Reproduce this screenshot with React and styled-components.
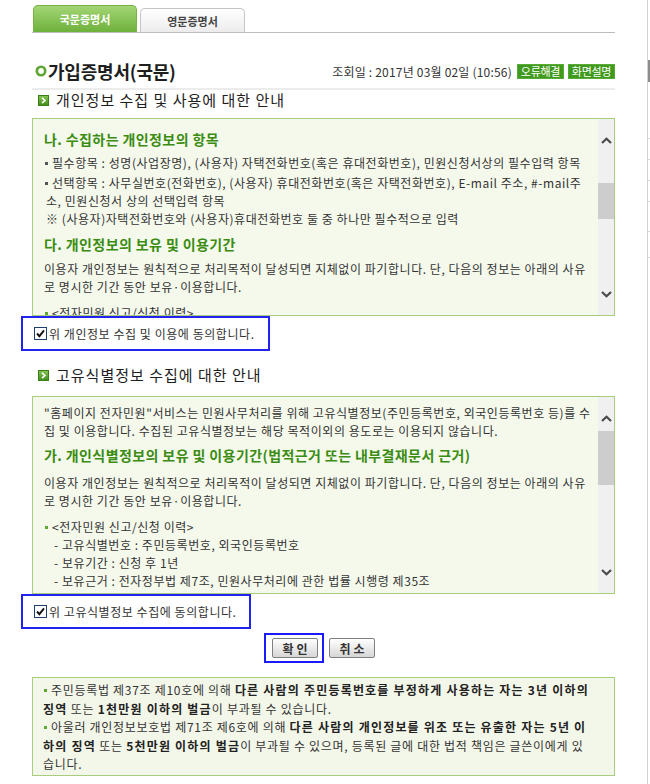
import styled, { createGlobalStyle } from "styled-components";

const GlobalStyle = createGlobalStyle`
  html, body { margin: 0; padding: 0; background: #fff; }
  body {
    font-family: "Noto Sans CJK KR", "Noto Sans", sans-serif;
    font-size: 12px;
    color: #333;
  }
`;

const Ring = () => (
    <svg width="12" height="12" viewBox="0 0 12 12">
        <circle cx="6" cy="6" r="4.2" fill="none" stroke="#5ea531" strokeWidth="2.6" />
    </svg>
);

const ArrowIcon = () => (
    <svg width="11" height="11" viewBox="0 0 11 11">
        <defs>
            <linearGradient id="ag" x1="0" y1="0" x2="0" y2="1">
                <stop offset="0" stopColor="#86c653" />
                <stop offset="1" stopColor="#3f8c19" />
            </linearGradient>
        </defs>
        <rect x="0.5" y="0.5" width="10" height="10" fill="url(#ag)" stroke="#3b7f17" />
        <path d="M4 2.8 L6.9 5.5 L4 8.2" fill="none" stroke="#fff" strokeWidth="1.7" />
    </svg>
);

const Chevron = ({ down }) => (
    <svg width="11" height="8" viewBox="0 0 11 8">
        <path
            d={down ? "M1 2 L5.5 6.2 L10 2" : "M1 6 L5.5 1.8 L10 6"}
            fill="none"
            stroke="#4a4a4a"
            strokeWidth="2.2"
        />
    </svg>
);

const CheckIcon = () => (
    <svg width="13" height="13" viewBox="0 0 13 13">
        <rect x="0.5" y="0.5" width="12" height="12" fill="#fff" stroke="#1c3f6e" />
        <path d="M3 6.5 L5.4 9.2 L10 3.4" fill="none" stroke="#111" strokeWidth="1.9" />
    </svg>
);

const App = () => {
    return (
        <>
            <GlobalStyle />
            <Page>
                <Main>
                    <TabBar>
                        <Tab $active>국문증명서</Tab>
                        <Tab>영문증명서</Tab>
                    </TabBar>

                    <TitleRow>
                        <Title><Ring />가입증명서(국문)</Title>
                        <Meta>
                            <DateText>조회일 : 2017년 03월 02일 (10:56)</DateText>
                            <GreenButton>오류해결</GreenButton>
                            <GreenButton>화면설명</GreenButton>
                        </Meta>
                    </TitleRow>

                    <SectionHead $mt={0} $mb={8}>
                        <ArrowIcon />개인정보 수집 및 사용에 대한 안내
                    </SectionHead>
                    <ScrollBox>
                        <BoxContent $pt={10}>
                            <BoxHeading $mt={0} $mb={5}>나. 수집하는 개인정보의 항목</BoxHeading>
                            <Line><Dot />필수항목 : 성명(사업장명), (사용자) 자택전화번호(혹은 휴대전화번호), 민원신청서상의 필수입력 항목</Line>
                            <Line $mt={2}><Dot />선택항목 : 사무실번호(전화번호), (사용자) 휴대전화번호(혹은 자택전화번호), E-mail 주소, #-mail주</Line>
                            <Line $indent={2}>소, 민원신청서 상의 선택입력 항목</Line>
                            <Line $indent={2}>※ (사용자)자택전화번호와 (사용자)휴대전화번호 둘 중 하나만 필수적으로 입력</Line>
                            <BoxHeading $mt={6} $mb={6}>다. 개인정보의 보유 및 이용기간</BoxHeading>
                            <Line>이용자 개인정보는 원칙적으로 처리목적이 달성되면 지체없이 파기합니다. 단, 다음의 정보는 아래의 사유</Line>
                            <Line>로 명시한 기간 동안 보유·이용합니다.</Line>
                            <Line $mt={8}><Dot $green />&lt;전자민원 신고/신청 이력&gt;</Line>
                        </BoxContent>
                        <Scrollbar>
                            <ScrollArrow $up><Chevron /></ScrollArrow>
                            <Track>
                                <Thumb $top={30} $height={36} />
                            </Track>
                            <ScrollArrow><Chevron down /></ScrollArrow>
                        </Scrollbar>
                    </ScrollBox>

                    <AgreeRow>
                        <CheckIcon />
                        <AgreeLabel>위 개인정보 수집 및 이용에 동의합니다.</AgreeLabel>
                    </AgreeRow>

                    <SectionHead $mt={14} $mb={11}>
                        <ArrowIcon />고유식별정보 수집에 대한 안내
                    </SectionHead>
                    <ScrollBox>
                        <BoxContent $pt={7}>
                            <Line>"홈페이지 전자민원"서비스는 민원사무처리를 위해 고유식별정보(주민등록번호, 외국인등록번호 등)를 수</Line>
                            <Line>집 및 이용합니다. 수집된 고유식별정보는 해당 목적이외의 용도로는 이용되지 않습니다.</Line>
                            <BoxHeading $mt={5} $mb={9}>가. 개인식별정보의 보유 및 이용기간(법적근거 또는 내부결재문서 근거)</BoxHeading>
                            <Line>이용자 개인정보는 원칙적으로 처리목적이 달성되면 지체없이 파기합니다. 단, 다음의 정보는 아래의 사유</Line>
                            <Line>로 명시한 기간 동안 보유·이용합니다.</Line>
                            <Line $mt={8}><Dot $green />&lt;전자민원 신고/신청 이력&gt;</Line>
                            <Line $indent={10}>- 고유식별번호 : 주민등록번호, 외국인등록번호</Line>
                            <Line $indent={10}>- 보유기간 : 신청 후 1년</Line>
                            <Line $indent={10}>- 보유근거 : 전자정부법 제7조, 민원사무처리에 관한 법률 시행령 제35조</Line>
                        </BoxContent>
                        <Scrollbar>
                            <ScrollArrow $up><Chevron /></ScrollArrow>
                            <Track>
                                <Thumb $top={0} $height={54} />
                            </Track>
                            <ScrollArrow><Chevron down /></ScrollArrow>
                        </Scrollbar>
                    </ScrollBox>

                    <AgreeRow>
                        <CheckIcon />
                        <AgreeLabel>위 고유식별정보 수집에 동의합니다.</AgreeLabel>
                    </AgreeRow>

                    <ButtonRow>
                        <FocusRing>
                            <GrayButton>확인</GrayButton>
                        </FocusRing>
                        <GrayButton>취소</GrayButton>
                    </ButtonRow>

                    <Notice>
                        <NoticeLine><Dot $green />주민등록법 제37조 제10호에 의해 <b>다른 사람의 주민등록번호를 부정하게 사용하는 자는 3년 이하의</b></NoticeLine>
                        <NoticeLine><b>징역</b> 또는 <b>1천만원 이하의 벌금</b>이 부과될 수 있습니다.</NoticeLine>
                        <NoticeLine><Dot $green />아울러 개인정보보호법 제71조 제6호에 의해 <b>다른 사람의 개인정보를 위조 또는 유출한 자는 5년 이</b></NoticeLine>
                        <NoticeLine><b>하의 징역</b> 또는 <b>5천만원 이하의 벌금</b>이 부과될 수 있으며, 등록된 글에 대한 법적 책임은 글쓴이에게 있</NoticeLine>
                        <NoticeLine>습니다.</NoticeLine>
                    </Notice>
                </Main>

                <Side>
                    <SideBlock />
                    <SideRows>
                        <SideRow $h={20} />
                        <SideRow $h={20} />
                        <SideRow $h={20} />
                        <SideRow $h={29} />
                        <SideRow $h={25} />
                        <SideRow $h={1} />
                    </SideRows>
                </Side>
            </Page>
        </>
    )
}

export default App;


const Page = styled.div`
    display: flex;
    width: 650px;
    min-height: 784px;
`
const Main = styled.div`
    flex: 0 0 647px;
    box-sizing: border-box;
    padding: 5px 32px 0 32px;
`
const TabBar = styled.div`
    display: flex;
    align-items: flex-end;
    gap: 3px;
    padding-left: 1px;
    height: 27px;
    border-bottom: 1px solid #bcbcbc;
`
const Tab = styled.div`
    box-sizing: border-box;
    width: ${p => p.$active ? 104 : 105}px;
    height: ${p => p.$active ? 27 : 24}px;
    display: flex;
    align-items: center;
    justify-content: center;
    font-size: 11px;
    font-weight: 700;
    border-radius: 5px 5px 0 0;
    color: ${p => p.$active ? '#fff' : '#444'};
    background: ${p => p.$active
        ? 'linear-gradient(#a3d574, #6eb13c)'
        : 'linear-gradient(#ffffff, #ececec)'};
    border: 1px solid ${p => p.$active ? '#76b444' : '#c4c4c4'};
    border-bottom: none;
`
const TitleRow = styled.div`
    display: flex;
    align-items: center;
    justify-content: space-between;
    padding: 27px 0 6px;
    border-bottom: 2px solid #ececec;
`
const Title = styled.h1`
    display: flex;
    align-items: center;
    gap: 1px;
    margin: 0;
    padding-left: 3px;
    font-size: 18px;
    line-height: 22px;
    font-weight: 700;
    color: #1e1e1e;
    letter-spacing: -0.2px;
`
const Meta = styled.div`
    display: flex;
    align-items: center;
    gap: 4px;
`
const DateText = styled.span`
    font-size: 12px;
    color: #333;
    margin-right: 1px;
    letter-spacing: 0.2px;
`
const GreenButton = styled.span`
    width: 47px;
    height: 15px;
    line-height: 15px;
    text-align: center;
    font-size: 11px;
    color: #fff;
    background: #3f9a1d;
    box-shadow: inset 0 0 0 1px #58ab35;
    letter-spacing: -0.3px;
`
const SectionHead = styled.h2`
    display: flex;
    align-items: center;
    gap: 7px;
    margin: ${p => p.$mt}px 0 ${p => p.$mb}px;
    padding-left: 6px;
    font-size: 15px;
    line-height: 20px;
    font-weight: 400;
    letter-spacing: 1px;
    color: #1e1e1e;
`
const ScrollBox = styled.div`
    display: flex;
    box-sizing: border-box;
    height: 198px;
    border: 1px solid #a8cd7d;
    background: #f5f9ec;
`
const BoxContent = styled.div`
    flex: 1;
    overflow: hidden;
    padding: ${p => p.$pt}px 6px 0 11px;
`
const BoxHeading = styled.h3`
    margin: ${p => p.$mt}px 0 ${p => p.$mb}px;
    font-size: 14px;
    line-height: 20px;
    font-weight: 700;
    letter-spacing: 0.4px;
    color: #3b8c12;
    white-space: nowrap;
`
const Line = styled.div`
    margin-top: ${p => p.$mt || 0}px;
    padding-left: ${p => p.$indent || 0}px;
    line-height: 18px;
    letter-spacing: 0.55px;
    white-space: nowrap;
    color: #333;
`
const Dot = styled.span`
    display: inline-block;
    width: 3px;
    height: 3px;
    margin: 0 4px 3px 1px;
    vertical-align: middle;
    background: ${p => p.$green ? '#5fa832' : '#555'};
`
const Scrollbar = styled.div`
    flex: 0 0 16px;
    display: flex;
    flex-direction: column;
    background: #f0f0f0;
`
const ScrollArrow = styled.div`
    box-sizing: border-box;
    height: 34px;
    display: flex;
    justify-content: center;
    align-items: ${p => p.$up ? 'flex-start' : 'flex-end'};
    padding: ${p => p.$up ? '18px 0 0' : '0 0 17px'};
`
const Track = styled.div`
    flex: 1;
`
const Thumb = styled.div`
    margin-top: ${p => p.$top}px;
    height: ${p => p.$height}px;
    background: #cdcdcd;
`
const AgreeRow = styled.label`
    display: inline-flex;
    align-items: center;
    gap: 2px;
    box-sizing: border-box;
    height: 35px;
    margin-left: -11px;
    padding: 0 13px 0 11px;
    border: 2px solid #2323f0;
`
const AgreeLabel = styled.span`
    font-size: 12px;
    letter-spacing: 0.55px;
    color: #333;
`
const ButtonRow = styled.div`
    display: flex;
    justify-content: center;
    align-items: center;
    gap: 5px;
    margin-top: 4px;
    padding-right: 8px;
`
const FocusRing = styled.span`
    display: inline-flex;
    padding: 3px 4px 3px 6px;
    border: 2px solid #1a1aff;
`
const GrayButton = styled.button`
    box-sizing: border-box;
    width: 46px;
    height: 20px;
    padding: 0;
    font-family: inherit;
    font-size: 12px;
    font-weight: 700;
    letter-spacing: 3px;
    text-indent: 3px;
    color: #333;
    background: linear-gradient(#ffffff, #d6d6d6);
    border: 1px solid #808080;
    border-radius: 2px;
`
const Notice = styled.div`
    margin-top: 14px;
    padding: 3px 10px 1px 10px;
    border: 1px solid #a8cd7d;
    background: #f3f7e9;
    b { color: #222; letter-spacing: 1.2px; }
`
const NoticeLine = styled.div`
    line-height: 18.5px;
    letter-spacing: 0.7px;
    white-space: nowrap;
    color: #333;
`
const Side = styled.div`
    flex: 1;
    border-left: 1px solid #d2d2d2;
`
const SideBlock = styled.div`
    margin-top: 60px;
    height: 22px;
    background: #8c8c8c;
`
const SideRows = styled.div`
    margin-top: 56px;
`
const SideRow = styled.div`
    height: ${p => p.$h}px;
    border-top: 1px solid #dadada;
`
